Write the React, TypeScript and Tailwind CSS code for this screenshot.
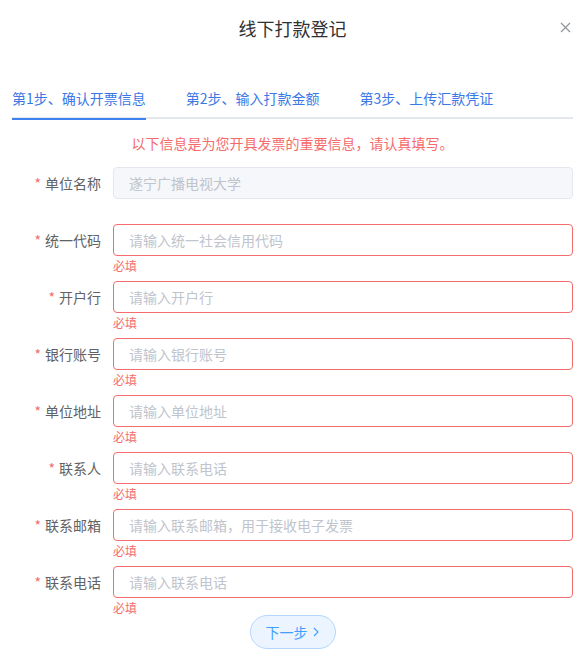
import React from 'react';

const fields = [
  { label: '统一代码', placeholder: '请输入统一社会信用代码' },
  { label: '开户行', placeholder: '请输入开户行' },
  { label: '银行账号', placeholder: '请输入银行账号' },
  { label: '单位地址', placeholder: '请输入单位地址' },
  { label: '联系人', placeholder: '请输入联系电话' },
  { label: '联系邮箱', placeholder: '请输入联系邮箱，用于接收电子发票' },
  { label: '联系电话', placeholder: '请输入联系电话' },
];

const tabs = ['第1步、确认开票信息', '第2步、输入打款金额', '第3步、上传汇款凭证'];

function Label({ text }: { text: string }) {
  return (
    <div className="w-[101px] shrink-0 pr-3 text-right text-sm leading-8 text-[#606266]">
      <span className="mr-1 text-[#f56c6c]">*</span>
      {text}
    </div>
  );
}

export default function App() {
  return (
    <div
      className="relative w-[585px] h-[665px] bg-white"
      style={{ fontFamily: '"Noto Sans CJK SC", "Noto Sans", sans-serif' }}
    >
      <div className="pt-4 text-center text-[18px] leading-6 text-[#303133]">线下打款登记</div>
      <button className="absolute right-[14px] top-[22px] text-[#909399]">
        <svg width="11" height="11" viewBox="0 0 11 11" fill="none" stroke="currentColor" strokeWidth="1.2">
          <path d="M1 1l9 9M10 1l-9 9" />
        </svg>
      </button>

      <div className="px-3 mt-[39px]">
        <div className="relative flex h-10 items-center border-b-2 border-[#e4e7ed]">
          {tabs.map((t, i) => (
            <div
              key={t}
              className={
                'relative h-10 text-sm leading-10 text-[#3b78e6] ' + (i === 0 ? 'pr-5' : 'px-5')
              }
            >
              {t}
              {i === 0 && (
                <div className="absolute left-0 right-5 bottom-[-2px] h-[2px] bg-[#3f82ef]" />
              )}
            </div>
          ))}
        </div>

        <div className="mt-[14px] text-center text-sm leading-5 text-[#f56c6c]">
          以下信息是为您开具发票的重要信息，请认真填写。
        </div>

        <div className="mt-[14px] flex flex-col">
          <div className="flex h-[57px]">
            <Label text="单位名称" />
            <div className="flex-1">
              <div className="h-8 rounded border border-[#e4e7ed] bg-[#f5f7fa] px-[15px] text-sm leading-[30px] text-[#c0c4cc]">
                遂宁广播电视大学
              </div>
            </div>
          </div>
          {fields.map((f, i) => (
            <div key={i} className={'flex ' + (i === fields.length - 1 ? 'h-[49px]' : 'h-[57px]')}>
              <Label text={f.label} />
              <div className="flex-1">
                <input
                  className="block h-8 w-full rounded border border-[#f56c6c] px-[15px] text-sm text-[#606266] outline-none placeholder:text-[#c0c4cc]"
                  placeholder={f.placeholder}
                />
                <div className="pt-1 text-xs leading-3 text-[#f56c6c]">必填</div>
              </div>
            </div>
          ))}
        </div>

        <div className="flex justify-center">
          <button className="inline-flex h-[34px] items-center gap-1 rounded-full border border-[#b3d8ff] bg-[#ecf5ff] px-[15px] text-sm text-[#409eff]">
            下一步
            <svg width="8" height="10" viewBox="0 0 8 10" fill="none" stroke="currentColor" strokeWidth="1.1">
              <path d="M2 1l4 4-4 4" />
            </svg>
          </button>
        </div>
      </div>
    </div>
  );
}
